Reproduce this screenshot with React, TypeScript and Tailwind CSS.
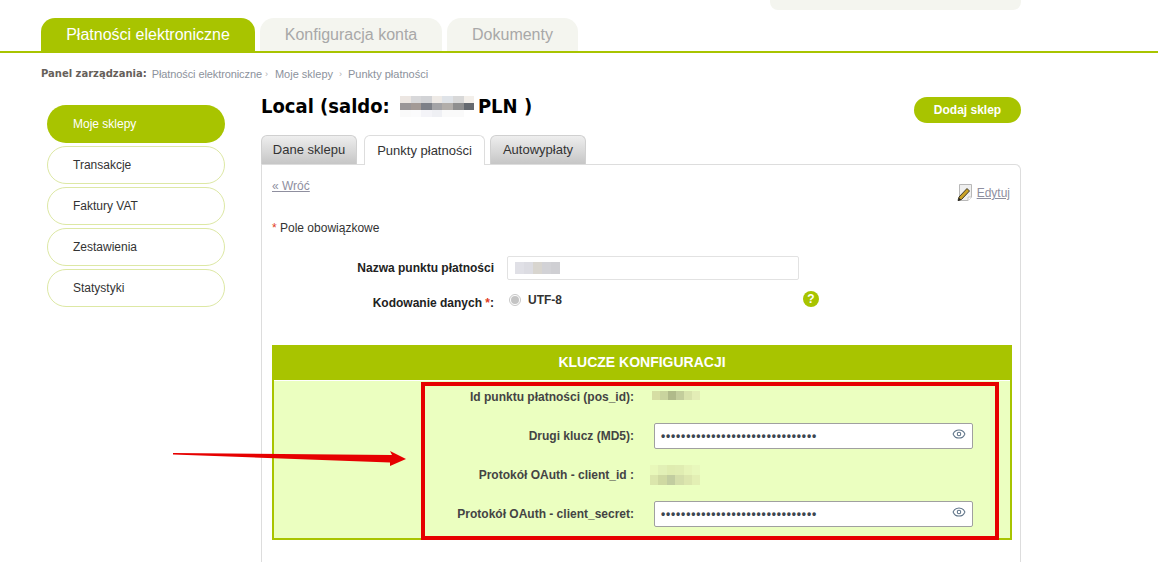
import React from "react";
import { Eye } from "lucide-react";

const Censor = ({ cols, rows, size, colors }: { cols: number; rows: number; size: [number, number]; colors: string[] }) => (
  <svg width={cols * size[0]} height={rows * size[1]} shapeRendering="crispEdges" className="block">
    {Array.from({ length: rows * cols }).map((_, i) => (
      <rect key={i} x={(i % cols) * size[0]} y={Math.floor(i / cols) * size[1]} width={size[0]} height={size[1]} fill={colors[i % colors.length]} />
    ))}
  </svg>
);

const titleC = ["#ece6e2","#d8d8da","#d2d3d6","#eeeae6","#dfe3e8","#d8d8d8","#f3efea","#9a9698","#a39a96","#7d8088","#a3a3a6","#b2aeaa","#8f8f8f","#666a70","#fafafa","#fbfbfc","#f4f4f8","#eff0f4","#fafafa","#fafafa","#ffffff"];
const limeC = ["#d6dea4","#c9d49e","#b0ba8a","#c3cd9c","#d8e2ac","#e3edb6"];
const limeTwo = ["#e8f8ba","#e2f0b6","#dfecb0","#e0edb2","#e6f4b8","#e8f8bc","#dbe6ac","#cfd9a2","#c2cda0","#d4deaa","#dce6ae","#e3efb4"];

const Pwd = () => (
  <div className="flex h-[26px] w-[319px] items-center justify-between rounded-[2px] border border-[#a0a0a0] bg-white pl-[6px] pr-[6px]">
    <span className="text-[12px] leading-none tracking-[0.83px] text-[#3c4650] font-['Liberation_Sans',sans-serif]">•••••••••••••••••••••••••••••••</span>
    <Eye size={14} strokeWidth={1.8} className="mb-[5px] text-[#5f7488]" />
  </div>
);

const side = ["Transakcje", "Faktury VAT", "Zestawienia", "Statystyki"];

export default function App() {
  return (
    <div className="relative h-[562px] w-[1158px] overflow-hidden bg-white font-['Liberation_Sans',Arial,sans-serif]">
      <div className="flex h-[18px] justify-end pr-[137px]">
        <div className="h-[10px] w-[251px] rounded-b-lg bg-[#f4f5ef]"></div>
      </div>
      <nav className="flex h-[35px] gap-[5px] border-b-2 border-[#a8c400] pl-[41px] text-[16px]">
        <div className="flex w-[214px] items-center justify-center rounded-t-[14px] bg-[#a8c400] text-white">Płatności elektroniczne</div>
        <div className="flex w-[182px] items-center justify-center rounded-t-[14px] bg-[#f4f5ef] text-[#a8a8a8]">Konfiguracja konta</div>
        <div className="flex w-[131px] items-center justify-center rounded-t-[14px] bg-[#f4f5ef] text-[#a8a8a8]">Dokumenty</div>
      </nav>
      <div className="mt-[14px] flex h-[14px] items-center pl-[41px] text-[11px] leading-none text-[#8c929c]">
        <b className="mr-[5px] font-['DejaVu_Sans',sans-serif] text-[10px] text-[#66605a]">Panel zarządzania:</b>
        <span className="tracking-[-0.1px]">Płatności elektroniczne</span>
        <span className="mx-[3px] text-[9px] text-[#b0b0b0]">›</span>
        <span className="ml-[4px]">Moje sklepy</span>
        <span className="mx-[6px] text-[9px] text-[#b0b0b0]">›</span>
        <span>Punkty płatności</span>
      </div>
      <div className="mt-[16px] flex pl-[47px]">
        <aside className="mt-[8px] flex w-[178px] flex-col gap-[3px] text-[12px]">
          <div className="flex h-[38px] items-center rounded-[19px] bg-[#a8c400] pl-[26px] text-white">Moje sklepy</div>
          {side.map((s) => (
            <div key={s} className="flex h-[38px] items-center rounded-[19px] border border-[#dde8a4] pl-[25px] text-[#333333]">{s}</div>
          ))}
        </aside>
        <main className="ml-[36px] w-[760px]">
          <div className="flex h-[38px] items-start justify-between">
            <h1 className="-mt-[1px] flex h-[20px] items-center whitespace-pre font-['DejaVu_Sans_Condensed','DejaVu_Sans',sans-serif] text-[20px] font-bold leading-none text-black">
              <span>Local (saldo:</span>
              <span className="ml-[10px] mr-[4px]"><Censor cols={7} rows={3} size={[10.6, 7]} colors={titleC} /></span>
              <span>PLN )</span>
            </h1>
            <div className="flex h-[26px] w-[107px] items-center justify-center rounded-[13px] bg-[#a8c400] text-[12px] font-bold text-white">Dodaj sklep</div>
          </div>
          <div className="flex h-[29px] text-[13px]">
            <div className="flex w-[96px] items-center justify-center rounded-t-[6px] border border-b-0 border-[#d0d0d0] bg-gradient-to-b from-[#eeeeee] to-[#c6c6c6] text-[#333333]">Dane sklepu</div>
            <div className="relative z-10 ml-[7px] flex h-[30px] w-[121px] items-center justify-center rounded-t-[6px] border border-b-0 border-[#dddddd] bg-white text-[#333333]">Punkty płatności</div>
            <div className="ml-[5px] flex w-[96px] items-center justify-center rounded-t-[6px] border border-b-0 border-[#d0d0d0] bg-gradient-to-b from-[#eeeeee] to-[#c6c6c6] text-[#333333]">Autowypłaty</div>
          </div>
          <section className="h-[420px] rounded-tr-[6px] border-x border-t border-[#dddddd] pl-[10px] pr-[8px] text-[12px] text-[#333333]">
            <div className="flex h-[56px] items-start justify-between pt-[12px]">
              <a className="text-[#8f8f9f] underline">« Wróć</a>
              <div className="mt-[7px] flex items-center gap-[2px]">
                <svg width="16" height="18" viewBox="0 0 16 18">
                  <path d="M2.5 .5H14.5V13L11 16.5H2.5Z" fill="#efefef" stroke="#b8b8b8" />
                  <path d="M14.5 13L11 13V16.5" fill="#fff" stroke="#c4c4c4" />
                  <path d="M1 16.5L2 13L10 4.5L12.5 7L4.5 15.5Z" fill="#c9a227" stroke="#2c2a20" strokeWidth=".9" />
                  <path d="M1 17L2 13.8L4 15.8Z" fill="#222" />
                </svg>
                <a className="ml-[2px] mr-[2px] text-[#8f8f9f] underline">Edytuj</a>
              </div>
            </div>
            <div className="h-[14px] leading-[14px]"><span className="text-[#e23c1c]">*</span> Pole obowiązkowe</div>
            <div className="mt-[21px] flex h-[24px] items-center">
              <div className="w-[222px] text-right font-bold text-[#222222]">Nazwa punktu płatności</div>
              <div className="ml-[13px] flex h-[24px] w-[292px] items-center rounded-[2px] border border-[#e2e2e2] pl-[7px]">
                <Censor cols={5} rows={2} size={[9, 6]} colors={["#e0e0e6","#dcdce2","#d8d5cf","#d2d2d6","#cfcfd3"]} />
              </div>
            </div>
            <div className="mt-[10px] flex h-[24px] items-start">
              <div className="w-[222px] pt-[4px] text-right font-bold text-[#222222]">Kodowanie danych <span className="text-[#e23c1c]">*</span>:</div>
              <div className="ml-[15px] mt-[4px] flex h-[12px] w-[12px] items-center justify-center rounded-full border border-[#c8c8c8] bg-white">
                <div className="h-[8px] w-[8px] rounded-full bg-[#c4c4c4]"></div>
              </div>
              <b className="ml-[7px] mt-[1px] text-[#333333]">UTF-8</b>
              <div className="ml-[241px] mt-[1px] flex h-[16px] w-[16px] items-center justify-center rounded-full bg-[#a8c400] text-[12px] font-bold leading-none text-white">?</div>
            </div>
            <div className="mt-[31px] w-[740px]">
              <div className="flex h-[35px] items-center justify-center bg-[#a8c400] text-[14px] font-bold text-white">KLUCZE KONFIGURACJI</div>
              <div className="h-[160px] border-x-2 border-b-2 border-t-0 border-[#a8c400] bg-[#ebffc0] text-[12px] font-bold text-[#444444]">
                <div className="h-[1px] bg-white"></div>
                <div className="grid grid-cols-[360px_auto] items-center gap-x-[20px] pt-[8px]">
                  <div className="flex h-[26px] items-center justify-end pb-[10px]">Id punktu płatności (pos_id):</div>
                  <div className="-ml-[2px] flex h-[26px] items-start pt-[2px]"><Censor cols={6} rows={1} size={[8, 9]} colors={limeC} /></div>
                  <div className="mt-[8px] flex h-[26px] items-center justify-end">Drugi klucz (MD5):</div>
                  <div className="mt-[8px]"><Pwd /></div>
                  <div className="mt-[13px] flex h-[26px] items-center justify-end">Protokół OAuth - client_id :</div>
                  <div className="-ml-[4px] mt-[13px] flex h-[26px] items-center"><Censor cols={6} rows={2} size={[8.4, 10]} colors={limeTwo} /></div>
                  <div className="mt-[13px] flex h-[26px] items-center justify-end">Protokół OAuth - client_secret:</div>
                  <div className="mt-[13px]"><Pwd /></div>
                </div>
              </div>
            </div>
          </section>
        </main>
      </div>
      <div className="absolute left-[421px] top-[382px] h-[158px] w-[578px] border-[4px] border-[#e60000]"></div>
      <svg className="absolute left-[170px] top-[448px]" width="240" height="24" viewBox="0 0 240 24">
        <path d="M3 5L3 6.5L220 14.5L220 18L236 11L220 3L222 7Z" fill="#e60000" />
      </svg>
    </div>
  );
}
